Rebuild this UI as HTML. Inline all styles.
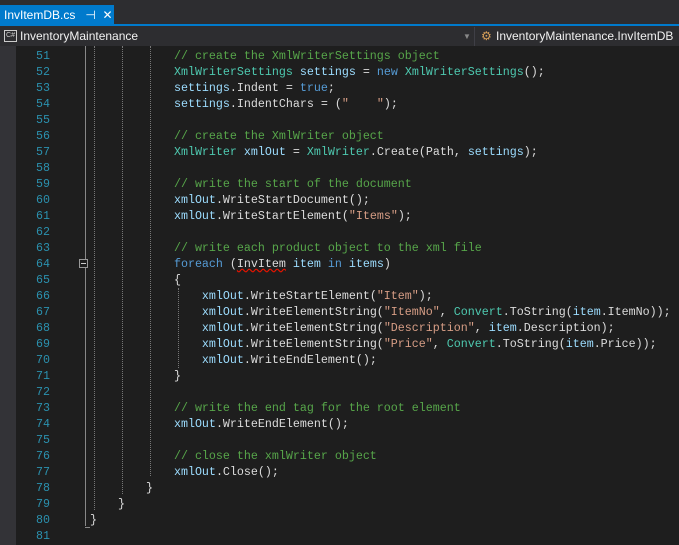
<!DOCTYPE html>
<html><head><style>
body{margin:0;width:679px;height:545px;background:#1e1e1e;overflow:hidden;position:relative;font-family:"Liberation Sans",sans-serif}
.tabbar{position:absolute;left:0;top:0;width:679px;height:27px;background:#2d2d30}
.tab{position:absolute;left:0;top:5px;width:114px;height:21px;background:#007acc;color:#fff;font-size:12px;line-height:20px;padding-left:4px;box-sizing:border-box}
.tabline{position:absolute;left:0;top:24px;width:679px;height:2px;background:#007acc}
.nav{position:absolute;left:0;top:27px;width:679px;height:19px;background:#2d2d30;color:#f1f1f1;font-size:12px;line-height:19px}
.cs{position:absolute;left:4px;top:3px;width:11px;height:10px;border:1px solid #ccc;font-size:7px;line-height:10px;text-align:center;color:#ccc}
.gut{position:absolute;left:0;top:46px;width:16px;height:499px;background:#333337}
.code{position:absolute;left:0;top:48px;font-family:"Liberation Mono",monospace;font-size:11.67px;color:#dcdcdc}
.l{height:16px;line-height:16px;white-space:pre;position:relative}
.n{position:absolute;left:16px;width:34px;text-align:right;color:#2b91af}
.t{position:absolute;left:90px}
.c{color:#57a64a}.k{color:#569cd6}.y{color:#4ec9b0}.s{color:#d69d85}.v{color:#9cdcfe}
.g{position:absolute;top:46px;width:0;border-left:1px dotted #777}
</style></head><body>
<div class="tabbar"><div class="tab">InvItemDB.cs &nbsp;&nbsp;⊣ &nbsp;✕</div><div class="tabline"></div></div>
<div class="nav"><div class="cs">C#</div><span style="position:absolute;left:20px">InventoryMaintenance</span>
<span style="position:absolute;left:463px;color:#888;font-size:8px">▼</span>
<div style="position:absolute;left:474px;top:0;width:1px;height:19px;background:#3f3f46"></div>
<span style="position:absolute;left:481px;color:#d8a05a">⚙</span><span style="position:absolute;left:496px">InventoryMaintenance.InvItemDB</span></div>
<div class="gut"></div>
<div style="position:absolute;left:85px;top:46px;width:1px;height:480px;background:#888"></div>
<div style="position:absolute;left:85px;top:527px;width:5px;height:1px;background:#888"></div>
<div class="g" style="left:94px;height:464px"></div>
<div class="g" style="left:122px;height:448px"></div>
<div class="g" style="left:150px;height:430px"></div>
<div class="g" style="left:178px;top:288px;height:80px"></div>
<div style="position:absolute;left:79px;top:259px;width:9px;height:9px;border:1px solid #999;background:#1e1e1e;box-sizing:border-box"><div style="position:absolute;left:1px;top:3px;width:5px;height:1px;background:#ccc"></div></div>
<div class="code">
<div class="l"><span class="n">51</span><span class="t">            <span class="c">// create the XmlWriterSettings object</span></span></div>
<div class="l"><span class="n">52</span><span class="t">            <span class="y">XmlWriterSettings</span> <span class="v">settings</span> = <span class="k">new</span> <span class="y">XmlWriterSettings</span>();</span></div>
<div class="l"><span class="n">53</span><span class="t">            <span class="v">settings</span>.Indent = <span class="k">true</span>;</span></div>
<div class="l"><span class="n">54</span><span class="t">            <span class="v">settings</span>.IndentChars = (<span class="s">"    "</span>);</span></div>
<div class="l"><span class="n">55</span></div>
<div class="l"><span class="n">56</span><span class="t">            <span class="c">// create the XmlWriter object</span></span></div>
<div class="l"><span class="n">57</span><span class="t">            <span class="y">XmlWriter</span> <span class="v">xmlOut</span> = <span class="y">XmlWriter</span>.Create(Path, <span class="v">settings</span>);</span></div>
<div class="l"><span class="n">58</span></div>
<div class="l"><span class="n">59</span><span class="t">            <span class="c">// write the start of the document</span></span></div>
<div class="l"><span class="n">60</span><span class="t">            <span class="v">xmlOut</span>.WriteStartDocument();</span></div>
<div class="l"><span class="n">61</span><span class="t">            <span class="v">xmlOut</span>.WriteStartElement(<span class="s">"Items"</span>);</span></div>
<div class="l"><span class="n">62</span></div>
<div class="l"><span class="n">63</span><span class="t">            <span class="c">// write each product object to the xml file</span></span></div>
<div class="l"><span class="n">64</span><span class="t">            <span class="k">foreach</span> (<span style="text-decoration:underline wavy #e51400">InvItem</span> <span class="v">item</span> <span class="k">in</span> <span class="v">items</span>)</span></div>
<div class="l"><span class="n">65</span><span class="t">            {</span></div>
<div class="l"><span class="n">66</span><span class="t">                <span class="v">xmlOut</span>.WriteStartElement(<span class="s">"Item"</span>);</span></div>
<div class="l"><span class="n">67</span><span class="t">                <span class="v">xmlOut</span>.WriteElementString(<span class="s">"ItemNo"</span>, <span class="y">Convert</span>.ToString(<span class="v">item</span>.ItemNo));</span></div>
<div class="l"><span class="n">68</span><span class="t">                <span class="v">xmlOut</span>.WriteElementString(<span class="s">"Description"</span>, <span class="v">item</span>.Description);</span></div>
<div class="l"><span class="n">69</span><span class="t">                <span class="v">xmlOut</span>.WriteElementString(<span class="s">"Price"</span>, <span class="y">Convert</span>.ToString(<span class="v">item</span>.Price));</span></div>
<div class="l"><span class="n">70</span><span class="t">                <span class="v">xmlOut</span>.WriteEndElement();</span></div>
<div class="l"><span class="n">71</span><span class="t">            }</span></div>
<div class="l"><span class="n">72</span></div>
<div class="l"><span class="n">73</span><span class="t">            <span class="c">// write the end tag for the root element</span></span></div>
<div class="l"><span class="n">74</span><span class="t">            <span class="v">xmlOut</span>.WriteEndElement();</span></div>
<div class="l"><span class="n">75</span></div>
<div class="l"><span class="n">76</span><span class="t">            <span class="c">// close the xmlWriter object</span></span></div>
<div class="l"><span class="n">77</span><span class="t">            <span class="v">xmlOut</span>.Close();</span></div>
<div class="l"><span class="n">78</span><span class="t">        }</span></div>
<div class="l"><span class="n">79</span><span class="t">    }</span></div>
<div class="l"><span class="n">80</span><span class="t">}</span></div>
<div class="l"><span class="n">81</span></div>
</div>
</body></html>
